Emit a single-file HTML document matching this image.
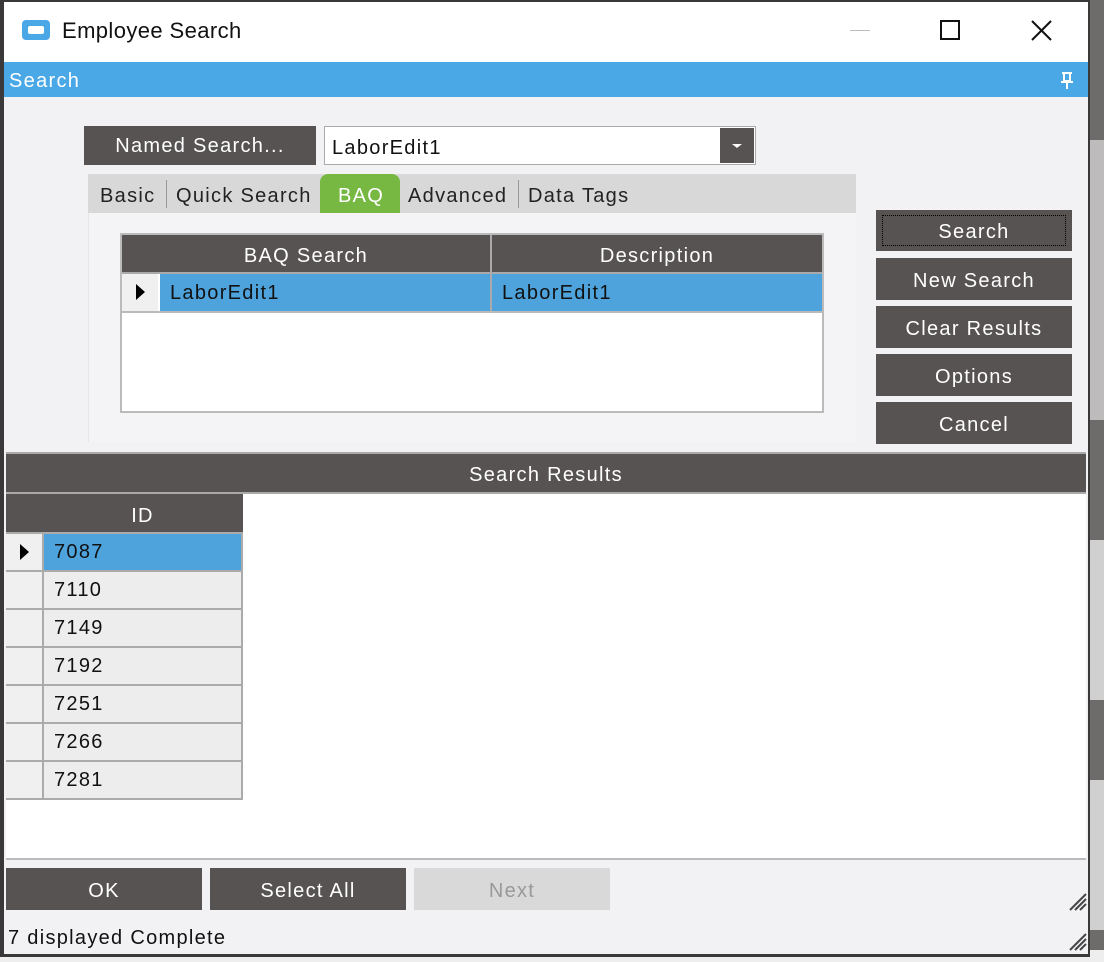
<!DOCTYPE html>
<html><head><meta charset="utf-8"><style>
*{margin:0;padding:0;box-sizing:border-box}
body{width:1104px;height:962px;background:#5a5757;position:relative;overflow:hidden;font-family:"Liberation Sans",sans-serif;font-size:20px;letter-spacing:1.3px}
.a{position:absolute}
.btn{position:absolute;background:#575353;color:#fff;text-align:center;font-size:20px;padding-top:2px}
.dk{background:#575353;color:#fff}
.t{margin-top:2px}
</style></head><body>
<div class="a" style="left:1090px;top:0;width:14px;height:962px;background:#6e6b6b"></div>
<div class="a" style="left:1090px;top:140px;width:14px;height:280px;background:#bdbbbb"></div>
<div class="a" style="left:1090px;top:540px;width:14px;height:160px;background:#d0d0d0"></div>
<div class="a" style="left:1090px;top:780px;width:14px;height:150px;background:#d0d0d0"></div>
<div class="a" style="left:0;top:950px;width:1104px;height:12px;background:#eee"></div>
<div class="a" style="left:0;top:0;width:1090px;height:957px;background:#3a3838"></div>
<div class="a" style="left:4px;top:2px;width:1084px;height:952px;background:#f2f2f4"></div>
<!-- title -->
<div class="a" style="left:4px;top:2px;width:1084px;height:60px;background:#fff"></div>
<div class="a" style="left:22px;top:20px;width:28px;height:20px;background:#4aa8e6;border-radius:4px"></div>
<div class="a" style="left:28px;top:26px;width:16px;height:8px;background:#fff;border-radius:2px"></div>
<div class="a" style="left:62px;top:18px;font-size:22px;color:#111;letter-spacing:0.4px">Employee Search</div>
<div class="a" style="left:850px;top:30px;width:20px;height:1px;background:#bbb"></div>
<div class="a" style="left:940px;top:20px;width:20px;height:20px;border:2px solid #111"></div>
<svg class="a" style="left:1031px;top:20px" width="21" height="21"><path d="M1 1L20 20M20 1L1 20" stroke="#111" stroke-width="2"/></svg>
<!-- search bar -->
<div class="a" style="left:4px;top:62px;width:1084px;height:35px;background:#4aa8e6"></div>
<div class="a" style="left:9px;top:70px;color:#fff;font-size:20px">Search</div>
<svg class="a" style="left:1060px;top:72px" width="14" height="18"><path d="M2 1h10M4 1v8h6V1M1 10h12M7 10v7" stroke="#fff" stroke-width="2" fill="none"/></svg>
<!-- named search -->
<div class="btn" style="left:84px;top:126px;width:232px;height:39px;line-height:37px">Named Search...</div>
<div class="a" style="left:324px;top:126px;width:432px;height:39px;background:#fff;border:1px solid #aaa"></div>
<div class="a" style="left:332px;top:137px;color:#111">LaborEdit1</div>
<div class="a" style="left:720px;top:128px;width:34px;height:35px;background:#575353"></div>
<div class="a" style="left:732px;top:144px;border-left:5px solid transparent;border-right:5px solid transparent;border-top:4px solid #fff"></div>
<!-- tabs -->
<div class="a" style="left:88px;top:174px;width:768px;height:39px;background:#d8d8d8"></div>
<div class="a" style="left:100px;top:185px;color:#222">Basic</div>
<div class="a" style="left:166px;top:180px;width:1px;height:28px;background:#999"></div>
<div class="a" style="left:176px;top:185px;color:#222">Quick Search</div>
<div class="a" style="left:320px;top:174px;width:80px;height:39px;background:#77b843;border-radius:8px 8px 0 0"></div>
<div class="a" style="left:338px;top:185px;color:#fff">BAQ</div>
<div class="a" style="left:408px;top:185px;color:#222">Advanced</div>
<div class="a" style="left:518px;top:180px;width:1px;height:28px;background:#999"></div>
<div class="a" style="left:528px;top:185px;color:#222">Data Tags</div>
<div class="a" style="left:88px;top:213px;width:768px;height:229px;background:#f4f4f6;border-left:1px solid #e6e6e6"></div>
<!-- BAQ grid -->
<div class="a" style="left:120px;top:233px;width:704px;height:180px;background:#fff;border:2px solid #bbb"></div>
<div class="a dk" style="left:122px;top:235px;width:700px;height:37px"></div>
<div class="a" style="left:490px;top:235px;width:2px;height:76px;background:#aaa"></div>
<div class="a" style="left:122px;top:245px;width:368px;text-align:center;color:#fff">BAQ Search</div>
<div class="a" style="left:492px;top:245px;width:330px;text-align:center;color:#fff">Description</div>
<div class="a" style="left:122px;top:272px;width:700px;height:2px;background:#aaa"></div>
<div class="a" style="left:122px;top:274px;width:36px;height:37px;background:#f0f0f0"></div>
<div class="a" style="left:136px;top:284px;border-top:8px solid transparent;border-bottom:8px solid transparent;border-left:9px solid #000"></div>
<div class="a" style="left:160px;top:274px;width:330px;height:37px;background:#4ea3dc"></div>
<div class="a" style="left:492px;top:274px;width:330px;height:37px;background:#4ea3dc"></div>
<div class="a" style="left:170px;top:282px;color:#111">LaborEdit1</div>
<div class="a" style="left:502px;top:282px;color:#111">LaborEdit1</div>
<div class="a" style="left:122px;top:311px;width:700px;height:2px;background:#bbb"></div>
<!-- right buttons -->
<div class="btn" style="left:876px;top:210px;width:196px;height:41px;line-height:41px"><div style="position:absolute;left:6px;top:5px;right:6px;bottom:5px;border:1px dotted #000"></div>Search</div>
<div class="btn" style="left:876px;top:258px;width:196px;height:42px;line-height:42px">New Search</div>
<div class="btn" style="left:876px;top:306px;width:196px;height:42px;line-height:42px">Clear Results</div>
<div class="btn" style="left:876px;top:354px;width:196px;height:42px;line-height:42px">Options</div>
<div class="btn" style="left:876px;top:402px;width:196px;height:42px;line-height:42px">Cancel</div>
<!-- results -->
<div class="a dk" style="left:6px;top:452px;width:1080px;height:40px;border-top:2px solid #aaa"></div>
<div class="a" style="left:6px;top:464px;width:1080px;text-align:center;color:#fff">Search Results</div>
<div class="a" style="left:6px;top:492px;width:1080px;height:368px;background:#fff;border-top:2px solid #aaa;border-bottom:2px solid #bbb"></div>
<div class="a dk" style="left:6px;top:494px;width:237px;height:38px"></div>
<div class="a" style="left:6px;top:505px;width:237px;text-align:center;padding-left:36px;color:#fff">ID</div>
<div id="rows"></div>
<!-- bottom -->
<div class="btn" style="left:6px;top:868px;width:196px;height:42px;line-height:42px">OK</div>
<div class="btn" style="left:210px;top:868px;width:196px;height:42px;line-height:42px">Select All</div>
<div class="btn" style="left:414px;top:868px;width:196px;height:42px;line-height:42px;background:#d9d9d9;color:#999">Next</div>
<div class="a" style="left:8px;top:927px;color:#111">7 displayed Complete</div>
<svg class="a" style="left:1066px;top:890px" width="22" height="62"><path d="M4 20L20 4M9 20L20 9M14 20L20 14M4 60L20 44M9 60L20 49M14 60L20 54" stroke="#444" stroke-width="2"/></svg>
<script>
var ids=["7087","7110","7149","7192","7251","7266","7281"],h="";
ids.forEach(function(v,i){var y=532+i*38;var sel=i==0;
h+='<div class="a" style="left:6px;top:'+y+'px;width:237px;height:38px;background:#ababab"></div>';
h+='<div class="a" style="left:6px;top:'+(y+2)+'px;width:36px;height:36px;background:#f0f0f0"></div>';
h+='<div class="a" style="left:44px;top:'+(y+2)+'px;width:197px;height:36px;background:'+(sel?'#4ea3dc':'#ededed')+'"></div>';
h+='<div class="a" style="left:54px;top:'+(y+9)+'px;color:#111">'+v+'</div>';
if(sel)h+='<div class="a" style="left:20px;top:'+(y+12)+'px;border-top:8px solid transparent;border-bottom:8px solid transparent;border-left:9px solid #000"></div>';});
h+='<div class="a" style="left:6px;top:798px;width:237px;height:2px;background:#ababab"></div>';
h+='<div class="a" style="left:241px;top:532px;width:2px;height:268px;background:#ababab"></div>';
document.getElementById("rows").innerHTML=h;
</script>
</body></html>
